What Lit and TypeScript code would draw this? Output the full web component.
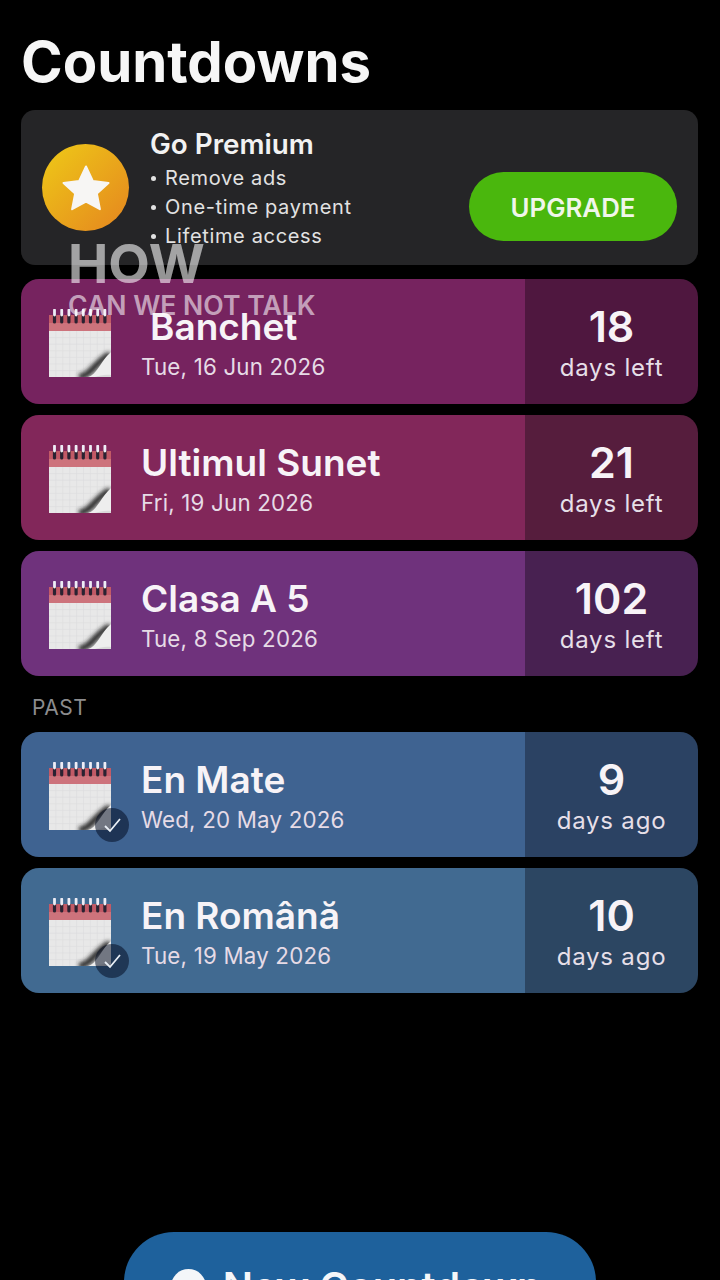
import { LitElement, html, css, svg } from "lit";
import { customElement } from "lit/decorators.js";

type Row = { title: string; date: string; num: string; unit: string; bg: string; side: string; done?: boolean; shift?: boolean };

const upcoming: Row[] = [
  { title: "Banchet", date: "Tue, 16 Jun 2026", num: "18", unit: "days left", bg: "#76235f", side: "#4f173f", shift: true },
  { title: "Ultimul Sunet", date: "Fri, 19 Jun 2026", num: "21", unit: "days left", bg: "#82275a", side: "#561d3d" },
  { title: "Clasa A 5", date: "Tue, 8 Sep 2026", num: "102", unit: "days left", bg: "#6f327c", side: "#482151" },
];
const past: Row[] = [
  { title: "En Mate", date: "Wed, 20 May 2026", num: "9", unit: "days ago", bg: "#3f6391", side: "#2b4263", done: true },
  { title: "En Română", date: "Tue, 19 May 2026", num: "10", unit: "days ago", bg: "#416a91", side: "#2c4662", done: true },
];

const rings = [0, 1, 2, 3, 4, 5, 6, 7];
const calendar = svg`<svg class="cal" viewBox="0 0 62 68" width="62" height="68">
  <defs>
    <filter id="soft" x="-40%" y="-40%" width="180%" height="180%"><feGaussianBlur stdDeviation="2"/></filter>
    <filter id="tiny" x="-30%" y="-30%" width="160%" height="160%"><feGaussianBlur stdDeviation=".45"/></filter>
  </defs>
  <rect x="0" y="6" width="62" height="16" fill="#c25a66"/>
  <rect x="0" y="14" width="62" height="8" fill="#d4838a" opacity=".6"/>
  <rect x="0" y="22" width="62" height="46" fill="#e8e8e8"/>
  ${[1, 2, 3, 4, 5, 6, 7, 8].map((i) => svg`<path d="M${i * 6.9} 22V68" stroke="#dbdbde" stroke-width=".6"/>`)}
  ${[1, 2, 3, 4, 5, 6].map((i) => svg`<path d="M0 ${22 + i * 6.6}H62" stroke="#dbdbde" stroke-width=".6"/>`)}
  <g filter="url(#tiny)">
  ${rings.map((i) => svg`<path d="M${5.5 + i * 7.2} 6.500V13" stroke="#2a2230" stroke-width="3.200" stroke-linecap="round"/><path d="M${5.5 + i * 7.2} 1V6" stroke="#eeedf6" stroke-width="2.800" stroke-linecap="round"/>`)}
  </g>
  <path d="M38 68C46 66 49 52 62 44V68Z" fill="#d9d9d9"/>
  <path d="M30 68C43 66 45 54 61 45" fill="none" stroke="#262626" stroke-width="6" filter="url(#soft)"/>
  <path d="M39 68C48 66 51 53 62 43V66C56 65 50 67 46 68Z" fill="#eeeeee" filter="url(#tiny)"/>
</svg>`;

@customElement("app-root")
export class AppRoot extends LitElement {
  static styles = css`
    :host { display: block; position: relative; width: 720px; height: 1280px; overflow: hidden; background: #000; color: #fff; font-family: Inter, "Liberation Sans", sans-serif; }
    .page { display: flex; flex-direction: column; padding: 30px 22px 0 21px; }
    h1 { margin: 0 0 16px 0; font-size: 56.300px; line-height: 64px; font-weight: 700; letter-spacing: 0; color: #f6f6f6; }
    .premium { display: flex; align-items: center; height: 155px; box-sizing: border-box; padding: 0 21px; border-radius: 14px; background: #252527; margin-bottom: 14px; }
    .medal { flex: none; width: 87px; height: 87px; border-radius: 50%; background: linear-gradient(135deg, #eeca17, #e5851f); display: flex; align-items: center; justify-content: center; margin-right: 21px; }
    .copy { flex: 1; display: flex; flex-direction: column; margin-top: 4px; }
    .copy strong { font-size: 27.800px; line-height: 32px; font-weight: 600; color: #f2f2f2; margin-bottom: 4px; }
    .copy span { display: flex; font-size: 20px; line-height: 29px; color: #e2e2e2; letter-spacing: .65px; }
    .copy span::before { content: ""; width: 5px; height: 5px; margin: 12px 9px 0 1px; border-radius: 50%; background: #e2e2e2; flex: none; }
    .upgrade { flex: none; width: 208px; height: 69px; margin-top: 38px; padding-top: 2px; box-sizing: border-box; border-radius: 35px; background: #4ab70d; display: flex; align-items: center; justify-content: center; font-size: 25.800px; font-weight: 600; color: #f0f6ea; }
    .list { display: flex; flex-direction: column; gap: 11px; }
    .row { display: flex; height: 125px; border-radius: 18px; overflow: hidden; }
    .main { flex: 1; position: relative; display: flex; align-items: center; padding-left: 28px; }
    .cal { flex: none; display: block; margin-right: 30px; margin-top: 3px; }
    .text { display: flex; flex-direction: column; margin-top: 4px; }
    .title { font-size: 37px; line-height: 46px; font-weight: 600; color: #f7f3f7; margin-top: -2px; }
    .title.shift { margin-left: 9px; }
    .date { font-size: 22.300px; line-height: 30px; margin-top: 2px; color: #e6dbe6; letter-spacing: .2px; }
    .side { flex: none; width: 173px; box-sizing: border-box; padding-top: 3px; display: flex; flex-direction: column; align-items: center; justify-content: center; }
    .num { font-size: 43px; line-height: 46px; font-weight: 600; color: #f7f3f7; }
    .unit { font-size: 24px; line-height: 30px; margin-top: 4px; color: #e6dfe8; letter-spacing: .8px; }
    .past-label { margin: 19px 0 11px 11px; font-size: 21px; line-height: 26px; color: #8c8c8e; letter-spacing: .5px; }
    .badge { position: absolute; left: 74px; top: 76px; width: 34px; height: 34px; border-radius: 50%; background: rgba(0, 10, 30, .52); display: flex; align-items: center; justify-content: center; }
    .overlay { position: absolute; left: 68px; top: 235px; display: flex; flex-direction: column; }
    .how { font-size: 54px; line-height: 58px; font-weight: 700; color: rgba(255, 255, 255, .58); }
    .talk { font-size: 26.600px; line-height: 28px; font-weight: 600; color: rgba(255, 255, 255, .58); margin-top: -2px; }
    .fab { position: absolute; left: 124px; top: 1232px; width: 472px; height: 109px; box-sizing: border-box; padding-right: 8px; border-radius: 50px; background: #1e619c; display: flex; align-items: center; justify-content: center; gap: 17px; font-size: 39.800px; font-weight: 600; color: #f4f6f9; }
    .plus { width: 35px; height: 35px; border-radius: 50%; background: #f4f6f9; flex: none; }
  `;

  private row(r: Row) {
    return html`<div class="row">
      <div class="main" style="background:${r.bg}">
        ${calendar}
        <div class="text">
          <div class="title ${r.shift ? "shift" : ""}">${r.title}</div>
          <div class="date">${r.date}</div>
        </div>
        ${r.done
          ? html`<div class="badge"><svg width="18" height="18" viewBox="0 0 18 18"><path d="M2 10l5 5L17 3" fill="none" stroke="#e8eef5" stroke-width="1.800"/></svg></div>`
          : ""}
      </div>
      <div class="side" style="background:${r.side}">
        <div class="num">${r.num}</div>
        <div class="unit">${r.unit}</div>
      </div>
    </div>`;
  }

  render() {
    return html`<div class="page">
        <h1>Countdowns</h1>
        <div class="premium">
          <div class="medal">
            <svg width="48" height="46" viewBox="0 0 48 46"><path d="M24 1.500l6.800 14.500 15.700 2-11.600 10.600 3 15.600L24 36.600 10.100 44.200l3-15.600L1.500 18l15.700-2z" fill="#f7f6f4" stroke="#f7f6f4" stroke-width="2" stroke-linejoin="round"/></svg>
          </div>
          <div class="copy">
            <strong>Go Premium</strong>
            <span>Remove ads</span>
            <span>One-time payment</span>
            <span>Lifetime access</span>
          </div>
          <div class="upgrade">UPGRADE</div>
        </div>
        <div class="list">${upcoming.map((r) => this.row(r))}</div>
        <div class="past-label">PAST</div>
        <div class="list">${past.map((r) => this.row(r))}</div>
      </div>
      <div class="overlay"><div class="how">HOW</div><div class="talk">CAN WE NOT TALK</div></div>
      <div class="fab"><span class="plus"></span><span>New Countdown</span></div>`;
  }
}
